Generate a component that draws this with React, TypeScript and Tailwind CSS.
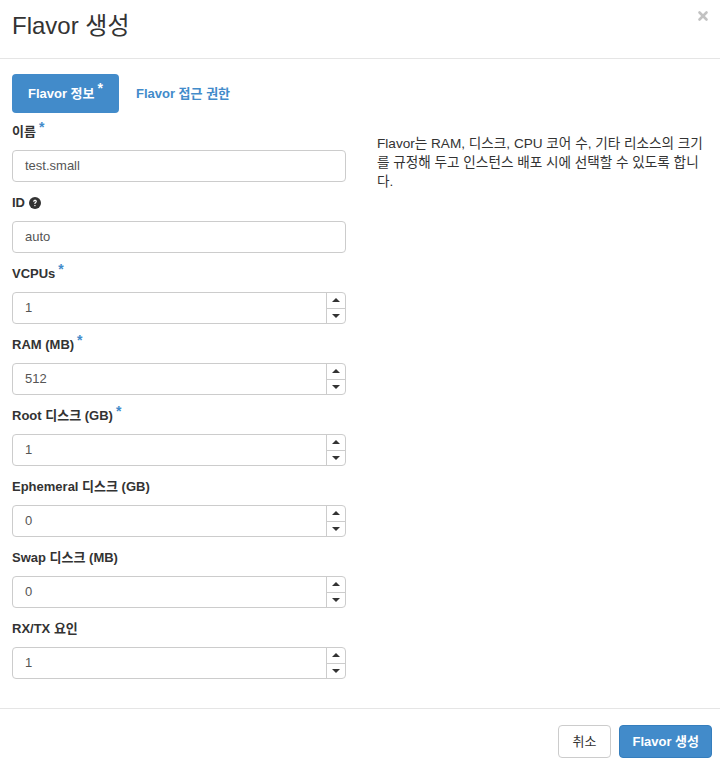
import { X } from "lucide-react"

const font = { fontFamily: '"Liberation Sans", "Noto Sans CJK KR", sans-serif' }

interface Field {
  label: string
  value: string
  required?: boolean
  help?: boolean
  spinner?: boolean
}

const fields: Field[] = [
  { label: "이름", value: "test.small", required: true },
  { label: "ID", value: "auto", help: true },
  { label: "VCPUs", value: "1", required: true, spinner: true },
  { label: "RAM (MB)", value: "512", required: true, spinner: true },
  { label: "Root 디스크 (GB)", value: "1", required: true, spinner: true },
  { label: "Ephemeral 디스크 (GB)", value: "0", spinner: true },
  { label: "Swap 디스크 (MB)", value: "0", spinner: true },
  { label: "RX/TX 요인", value: "1", spinner: true },
]

function Asterisk({ white }: { white?: boolean }) {
  return (
    <span className={`ml-[3px] relative -top-[5px] text-[14px] font-bold ${white ? "text-white" : "text-[#428bca]"}`}>*</span>
  )
}

function HelpIcon() {
  return (
    <svg viewBox="0 0 16 16" className="w-[12px] h-[12px] ml-[4px] inline-block">
      <circle cx="8" cy="8" r="8" fill="#333" />
      <path d="M5.6 6.2c0-1.5 1.1-2.4 2.5-2.4s2.4.9 2.4 2.1c0 1.6-1.9 1.8-1.9 3.1v.4H7.1v-.5c0-1.8 1.8-1.9 1.8-2.9 0-.5-.3-.8-.9-.8-.6 0-.9.4-.9 1H5.6z" fill="#fff" />
      <rect x="7.1" y="10.6" width="1.6" height="1.6" fill="#fff" />
    </svg>
  )
}

function Spinner() {
  return (
    <div className="w-[19px] border-l border-[#ccc] flex flex-col">
      <div className="flex-1 flex items-center justify-center border-b border-[#ccc]">
        <svg viewBox="0 0 8 4" className="w-[8px] h-[4px]"><path d="M0 4 4 0 8 4z" fill="#333" /></svg>
      </div>
      <div className="flex-1 flex items-center justify-center">
        <svg viewBox="0 0 8 4" className="w-[8px] h-[4px]"><path d="M0 0 4 4 8 0z" fill="#333" /></svg>
      </div>
    </div>
  )
}

function FormField({ field }: { field: Field }) {
  return (
    <div className="mb-[12px]">
      <label className="flex items-center h-[18px] mb-[9px] text-[13px] font-bold text-[#333]">
        {field.label}
        {field.required && <Asterisk />}
        {field.help && <HelpIcon />}
      </label>
      <div className="flex h-[32px] border border-[#ccc] rounded-[4px] bg-white overflow-hidden">
        <div className="flex-1 flex items-center pl-[12px] text-[13px] text-[#555]">{field.value}</div>
        {field.spinner && <Spinner />}
      </div>
    </div>
  )
}

export default function App() {
  return (
    <div className="w-[720px] h-[766px] bg-white overflow-hidden" style={font}>
      <div className="h-[59px] border-b border-[#e5e5e5] flex items-start justify-between pl-[12px] pr-[10px]">
        <h4 className="text-[24px] text-[#333] leading-none mt-[14px]">Flavor 생성</h4>
        <X className="w-[14px] h-[14px] mt-[9px] text-[#c2c2c2]" strokeWidth={4.5} />
      </div>

      <div className="px-[12px] pt-[15px] h-[650px] border-b border-[#e5e5e5]">
        <div className="flex items-center gap-[17px] mb-[10px]">
          <div className="h-[39px] px-[16px] rounded-[4px] bg-[#428bca] text-white text-[13px] font-bold flex items-center">
            Flavor 정보<Asterisk white />
          </div>
          <div className="text-[13px] font-bold text-[#428bca]">Flavor 접근 권한</div>
        </div>

        <div className="flex">
          <div className="w-[334px] shrink-0">
            {fields.map((f) => (
              <FormField key={f.label} field={f} />
            ))}
          </div>
          <p className="w-[338px] ml-[31px] mt-[11px] text-[13.6px] leading-[19px] text-[#333]">
            Flavor는 RAM, 디스크, CPU 코어 수, 기타 리소스의 크기를 규정해 두고 인스턴스 배포 시에 선택할 수 있도록 합니다.
          </p>
        </div>
      </div>

      <div className="flex justify-end gap-[8px] pt-[16px] pr-[8px]">
        <button className="h-[33px] px-[14px] rounded-[4px] border border-[#ccc] bg-white text-[13px] text-[#333]">취소</button>
        <button className="h-[33px] px-[12px] rounded-[4px] border border-[#357ebd] bg-[#428bca] text-[13px] font-bold text-white">Flavor 생성</button>
      </div>
    </div>
  )
}
